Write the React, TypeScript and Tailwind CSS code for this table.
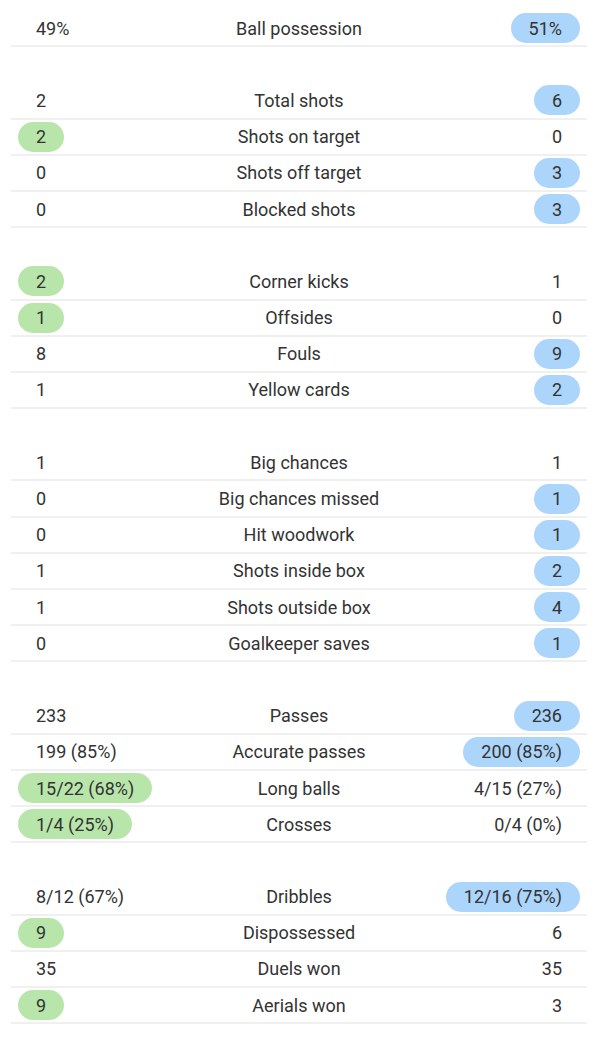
import React from "react";

type Row = { l: string; label: string; r: string; win?: "l" | "r" };

const groups: Row[][] = [
  [{ l: "49%", label: "Ball possession", r: "51%", win: "r" }],
  [
    { l: "2", label: "Total shots", r: "6", win: "r" },
    { l: "2", label: "Shots on target", r: "0", win: "l" },
    { l: "0", label: "Shots off target", r: "3", win: "r" },
    { l: "0", label: "Blocked shots", r: "3", win: "r" },
  ],
  [
    { l: "2", label: "Corner kicks", r: "1", win: "l" },
    { l: "1", label: "Offsides", r: "0", win: "l" },
    { l: "8", label: "Fouls", r: "9", win: "r" },
    { l: "1", label: "Yellow cards", r: "2", win: "r" },
  ],
  [
    { l: "1", label: "Big chances", r: "1" },
    { l: "0", label: "Big chances missed", r: "1", win: "r" },
    { l: "0", label: "Hit woodwork", r: "1", win: "r" },
    { l: "1", label: "Shots inside box", r: "2", win: "r" },
    { l: "1", label: "Shots outside box", r: "4", win: "r" },
    { l: "0", label: "Goalkeeper saves", r: "1", win: "r" },
  ],
  [
    { l: "233", label: "Passes", r: "236", win: "r" },
    { l: "199 (85%)", label: "Accurate passes", r: "200 (85%)", win: "r" },
    { l: "15/22 (68%)", label: "Long balls", r: "4/15 (27%)", win: "l" },
    { l: "1/4 (25%)", label: "Crosses", r: "0/4 (0%)", win: "l" },
  ],
  [
    { l: "8/12 (67%)", label: "Dribbles", r: "12/16 (75%)", win: "r" },
    { l: "9", label: "Dispossessed", r: "6", win: "l" },
    { l: "35", label: "Duels won", r: "35" },
    { l: "9", label: "Aerials won", r: "3", win: "l" },
  ],
];

function StatRow({ row }: { row: Row }) {
  return (
    <div className="flex h-[36.2px] items-center border-b-2 border-[#f0f0f0] px-[7px]">
      <div className="flex flex-1 justify-start">
        <span
          className={
            row.win === "l"
              ? "flex h-[30px] items-center rounded-full bg-[#b8e6aa] px-[18px]"
              : "flex h-[30px] items-center px-[18px]"
          }
        >
          {row.l}
        </span>
      </div>
      <div className="flex-none text-center">{row.label}</div>
      <div className="flex flex-1 justify-end">
        <span
          className={
            row.win === "r"
              ? "flex h-[30px] items-center rounded-full bg-[#acd5fb] px-[18px]"
              : "flex h-[30px] items-center px-[18px]"
          }
        >
          {row.r}
        </span>
      </div>
    </div>
  );
}

export default function App() {
  return (
    <div
      className="min-h-[1047px] w-[600px] bg-white pl-[11px] pr-[13px] pt-[11px] text-[18px] text-[#333333]"
      style={{ fontFamily: "Roboto, 'Liberation Sans', sans-serif" }}
    >
      {groups.map((g, i) => (
        <div key={i} className={i === 0 ? "" : "mt-[36.2px]"}>
          {g.map((row, j) => (
            <StatRow key={j} row={row} />
          ))}
        </div>
      ))}
    </div>
  );
}
